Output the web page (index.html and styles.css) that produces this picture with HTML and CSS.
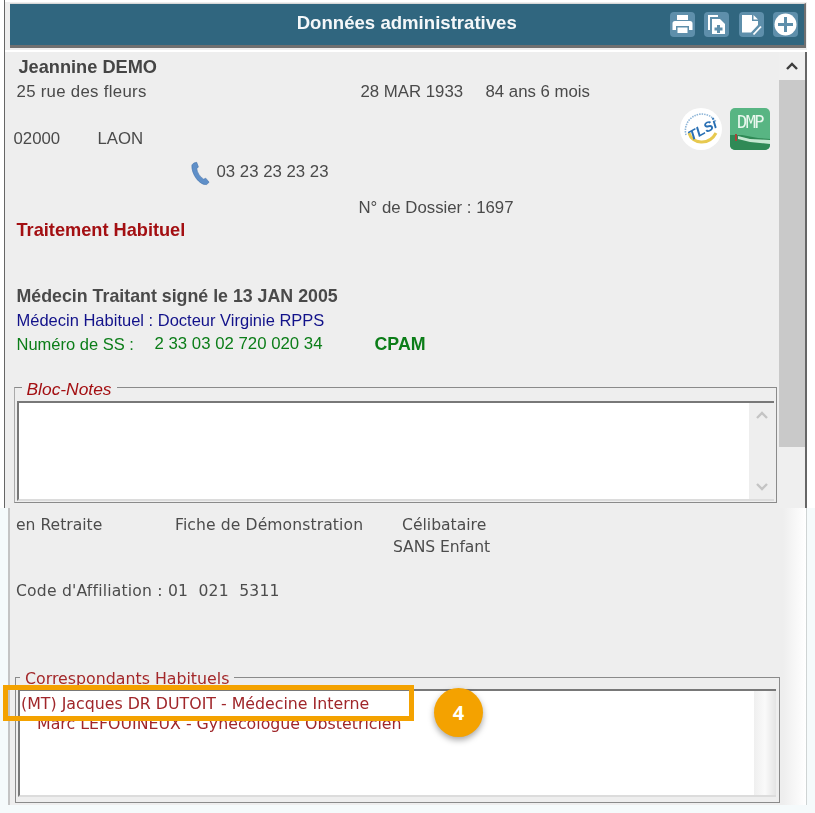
FILE: index.html
```html
<!DOCTYPE html>
<html lang="fr">
<head>
<meta charset="utf-8">
<title>Données administratives</title>
<link rel="stylesheet" href="styles.css">
</head>
<body>
<div class="sheet">
  <section class="upper">
    <header class="bar">
      <span></span>
      <h1 class="bar-title">Données administratives</h1>
      <div class="bar-tools">
        <span class="tool"><svg viewBox="0 0 25 25"><path fill="#fff" d="M7 3h11v5H7zM5 9h15a2.500 2.500 0 0 1 2.500 2.500V18H19v-4H6v4H2.500v-6.500A2.500 2.500 0 0 1 5 9z"/><path fill="#fff" d="M7.500 15.500h10V21h-10z"/></svg></span>
        <span class="tool"><svg viewBox="0 0 25 25"><path fill="none" stroke="#fff" stroke-width="2" d="M5 18V4h9"/><path fill="#fff" d="M8 7h8l5 5v10H8z"/><path fill="#5e8fab" d="M13 13h3v2.500h2.500v3H16V21h-3v-2.500h-2.500v-3H13z"/></svg></span>
        <span class="tool"><svg viewBox="0 0 25 25"><path fill="#fff" d="M3 3h10v6h6v4l-7 7.500H3z"/><path fill="#fff" d="M14.500 3l4.500 4.500h-4.500z"/><path fill="none" stroke="#fff" stroke-width="1.800" d="M14.500 22.500l7.500-8"/></svg></span>
        <span class="tool"><svg viewBox="0 0 25 25"><circle cx="12.500" cy="12.500" r="11" fill="#fff"/><path fill="#5e8fab" d="M11 5h3v6h6v3h-6v6h-3v-6H5v-3h6z"/></svg></span>
      </div>
    </header>
    <div class="upper-body">
      <div class="record">
        <div class="row name">Jeannine DEMO</div>
        <div class="row addr">
          <span class="c-street">25 rue des fleurs</span>
          <span class="c-birth">28 MAR 1933</span>
          <span>84 ans 6 mois</span>
        </div>
        <div class="mid">
          <div class="mid-left">
            <div class="row city"><span class="c-zip">02000</span><span>LAON</span></div>
            <div class="row phone">
              <svg class="phone-icon" viewBox="0 0 22 26"><path fill="#5f8fc8" stroke="#3f6ea8" stroke-width=".6" d="M4 1.500 7 .8l1.800 4.800-1.700 1.800c.4 4 3.200 8.600 7.200 11l2.200-1 3.500 4.200-2.500 2.400C10.500 25.500 1 13 2 3.500z"/></svg>
              <span>03 23 23 23 23</span>
            </div>
          </div>
          <div class="logos">
            <svg class="logo-tls" viewBox="0 0 42 42"><circle cx="21" cy="21" r="21" fill="#fff"/><path fill="none" stroke="#8fb6d8" stroke-width="1.600" stroke-dasharray="1.500 1" d="M6 27A16.500 16.500 0 0 1 36 14"/><path fill="none" stroke="#e7c94f" stroke-width="3" d="M9 25c3 11 20 13 27 0"/><text x="22" y="27" class="tls-text" transform="rotate(-28 21 21)">TLSi</text></svg>
            <div class="logo-dmp"><span class="dmp-text">DMP</span><svg class="dmp-wave" viewBox="0 0 40 17"><path fill="#2f8a56" d="M0 2h40v15H0z"/><path fill="#58b583" d="M0 0h40v6L28 5 12 2H0z"/><path fill="#c6e8d2" d="M8 3l12 3 20 1v4L20 9 8 6z"/><path fill="#a5443a" d="M5 1h2v7H5z"/></svg></div>
          </div>
        </div>
        <div class="row dossier">N° de Dossier : 1697</div>
        <div class="row treatment">Traitement Habituel</div>
        <div class="row doctor">Médecin Traitant signé le 13 JAN 2005</div>
        <div class="row usual">Médecin Habituel : Docteur Virginie RPPS</div>
        <div class="row ss">
          <span class="c-ss">Numéro de SS :</span>
          <span class="c-ssn">2 33 03 02 720 020 34</span>
          <strong class="cpam">CPAM</strong>
        </div>
        <div class="group notes">
          <div class="legend legend-notes">Bloc-Notes</div>
          <div class="well well-notes">
            <div class="well-main"></div>
            <div class="well-scroll">
              <svg class="chev" viewBox="0 0 14 10"><path fill="none" stroke="#c4c4c4" stroke-width="2.400" d="M2 8l5-5 5 5"/></svg>
              <svg class="chev" viewBox="0 0 14 10"><path fill="none" stroke="#c4c4c4" stroke-width="2.400" d="M2 2l5 5 5-5"/></svg>
            </div>
          </div>
        </div>
      </div>
      <div class="scroll">
        <div class="scroll-up"><svg class="chev" viewBox="0 0 14 10"><path fill="none" stroke="#3c3c3c" stroke-width="2.400" d="M2 8l5-5 5 5"/></svg></div>
        <div class="scroll-thumb"></div>
      </div>
    </div>
  </section>
  <section class="lower">
    <div class="lower-body">
      <div class="soft line-status">
        <span class="c-job">en Retraite</span>
        <span class="c-sheet">Fiche de Démonstration</span>
        <span>Célibataire</span>
      </div>
      <div class="soft line-kids">SANS Enfant</div>
      <div class="soft line-code">Code d'Affiliation : 01&nbsp; 021&nbsp; 5311</div>
      <div class="group corr">
        <div class="legend legend-corr">Correspondants Habituels</div>
        <div class="well well-corr">
          <div class="well-main corr-list">
            <div class="corr-mt">(MT) Jacques DR DUTOIT - Médecine Interne</div>
            <div class="corr-other">Marc LEFOUINEUX - Gynécologue Obstétricien</div>
          </div>
          <div class="well-scroll corr-scroll"></div>
        </div>
      </div>
    </div>
    <div class="lower-edge"></div>
  </section>
  <div class="mark-box"></div>
  <div class="mark-badge">4</div>
</div>
</body>
</html>
```

FILE: styles.css
```css
* { box-sizing: border-box; }
html, body { margin: 0; height: 100%; }
body {
  background: #fff;
  font-family: "Liberation Sans", Arial, sans-serif;
  overflow: hidden;
}
.sheet {
  position: relative;
  width: 815px;
  height: 813px;
  background: linear-gradient(#fff 0, #fff 508px, #f5fafb 508px);
}

/* upper window */
.upper {
  margin-left: 4px;
  width: 803px;
  height: 508px;
  padding-top: 3px;
  background: #eeeeee;
  border-left: 1.500px solid #666;
  box-shadow: inset 0 2px 0 #fff;
}
.bar {
  margin-left: 4.500px;
  height: 45px;
  width: 796.500px;
  display: grid;
  grid-template-columns: 1fr auto 1fr;
  align-items: start;
  background: #30667f;
  border-top: 1px solid #d8d8d8;
  border-bottom: 3px solid #707070;
  border-right: 2px solid #707070;
}
.bar-title {
  margin: 7px 0 0;
  font-size: 18.600px;
  line-height: 24px;
  font-weight: bold;
  color: #f4f7f9;
  white-space: nowrap;
  filter: blur(.3px);
}
.bar-tools {
  display: flex;
  justify-content: flex-end;
  gap: 9.500px;
  padding: 8px 6px 0 0;
}
.tool {
  width: 25px;
  height: 25px;
  border-radius: 4px;
  background: #5e8fab;
  filter: blur(.4px);
}
.tool svg { display: block; width: 25px; height: 25px; }

.upper-body {
  display: flex;
  height: 458px;
  margin-top: 2px;
  border-top: 2px solid #fff;
}
.record {
  flex: 1;
  padding: 4px 0 0 9.500px;
  font-size: 16.800px;
  color: #4a4a4a;
  filter: blur(.3px);
  min-width: 0;
}
.row { height: 22px; line-height: 22px; display: flex; white-space: nowrap; }
.name { font-size: 18.200px; font-weight: bold; padding-left: 4px; color: #454545; }
.addr { margin-top: 3px; padding-left: 2px; }
.c-street { width: 344px; letter-spacing: .3px; }
.c-birth { width: 125px; }
.mid { display: flex; margin-top: 5px; height: 75px; align-items: flex-start; }
.mid-left { flex: 1; padding-top: 20px; }
.city { margin-left: -1px; }
.c-zip { width: 84px; }
.phone { margin-top: 11px; padding-left: 175px; gap: 6px; align-items: flex-start; }
.phone-icon { width: 21px; height: 26px; flex: none; }
.logos { display: flex; gap: 8px; padding-right: 9px; }
.logo-tls { width: 42px; height: 42px; display: block; }
.tls-text { font: italic bold 14px "Liberation Sans", sans-serif; fill: #2a70b4; text-anchor: middle; }
.logo-dmp {
  width: 40px;
  height: 42px;
  border-radius: 5px;
  background: #58b583;
  overflow: hidden;
}
.dmp-text {
  display: block;
  padding-top: 4px;
  text-align: center;
  font: 17px/20px "DejaVu Sans Mono", monospace;
  color: #e9f7ee;
  letter-spacing: -1.500px;
}
.dmp-wave { display: block; width: 40px; height: 17px; margin-top: 1px; }
.dossier { margin-top: 14px; padding-left: 344px; }
.treatment { padding-left: 2px; font-weight: bold; font-size: 18.200px; color: #a30f12; }
.doctor { margin-top: 44px; padding-left: 2px; font-weight: bold; font-size: 17.800px; color: #4a4a4a; }
.usual { margin-top: 2px; padding-left: 2px; font-size: 16.500px; color: #12128a; }
.ss { margin-top: 2px; padding-left: 2px; color: #0b7d18; }
.c-ss { width: 138px; font-size: 16.500px; }
.c-ssn { width: 220px; }
.cpam { font-size: 17.800px; }

/* groups */
.group { border: 1px solid #8a8a8a; }
.notes {
  margin: 32px 2px 0 -1px;
  height: 116px;
  padding: 0 2px 2px 2px;
  border-left-color: #aaa;
}
.legend {
  width: fit-content;
  height: 16px;
  line-height: 16px;
  background: #eeeeee;
  padding: 0 5px;
}
.legend-notes {
  margin: -7px 0 0 5px;
  font-size: 17.400px;
  font-style: italic;
  color: #a30f12;
}
.well {
  display: flex;
  background: #fff;
  border-top: 2px solid #787878;
  border-left: 2px solid #787878;
  border-bottom: 2px solid #dcdcdc;
}
.well-notes { height: 100px; margin-top: 4px; }
.well-main { flex: 1; min-width: 0; }
.well-scroll {
  width: 25px;
  display: flex;
  flex-direction: column;
  justify-content: space-between;
  align-items: center;
  padding: 7px 0;
  background: #eeeeee;
}
.chev { width: 14px; height: 10px; display: block; }

/* main scrollbar */
.scroll {
  width: 28px;
  flex: none;
  border-right: 2px solid #666;
  background: #efefef;
}
.scroll-up { height: 28px; display: flex; align-items: center; justify-content: center; }
.scroll-thumb { height: 367px; background: #c9c9c9; }

/* lower window */
.lower {
  display: flex;
  margin-left: 8px;
  width: 799px;
  height: 297px;
  background: #eeeeee;
  border-left: 2px solid #c4c4c4;
  border-right: 1px solid #cfd4d4;
}
.lower-body {
  width: 773px;
  flex: none;
  padding-top: 6px;
  filter: blur(.45px);
}
.lower-edge { flex: 1; background: linear-gradient(90deg, #eeeeee, #fff); }
.soft {
  font-family: "DejaVu Sans", sans-serif;
  font-size: 15.600px;
  line-height: 22px;
  height: 22px;
  color: #4c4c4c;
  white-space: nowrap;
}
.line-status { display: flex; padding-left: 6px; }
.c-job { width: 159px; }
.c-sheet { width: 227px; letter-spacing: .1px; }
.line-kids { padding-left: 383px; letter-spacing: -.1px; }
.line-code { margin-top: 22px; padding-left: 6px; letter-spacing: .2px; }
.corr {
  margin: 75px 3px 0 5px;
  height: 126px;
  padding: 0 3px 2px 2px;
}
.legend-corr {
  margin: -7px 0 0 2px;
  font: 15.800px/16px "DejaVu Sans", sans-serif;
  color: #a3282a;
}
.well-corr { height: 108px; margin-top: 2px; }
.corr-list { font: 15.800px/20px "DejaVu Sans", sans-serif; color: #a0262a; padding-top: 3px; white-space: nowrap; }
.corr-mt { padding-left: 1px; }
.corr-other { padding-left: 17px; }
.corr-scroll { width: 22px; background: linear-gradient(90deg, #efefef, #fafafa 50%, #e4e4e4); padding: 0; }

/* annotation */
.mark-box {
  position: absolute;
  left: 3px;
  top: 685px;
  width: 411px;
  height: 36px;
  border: 5px solid #f4a200;
}
.mark-badge {
  position: absolute;
  left: 434px;
  top: 688px;
  width: 49px;
  height: 49px;
  border-radius: 50%;
  background: #f4a200;
  color: #fff;
  font: bold 20px/49px "Open Sans", sans-serif;
  text-align: center;
  box-shadow: 0 3px 6px rgba(0, 0, 0, .35);
}
```
